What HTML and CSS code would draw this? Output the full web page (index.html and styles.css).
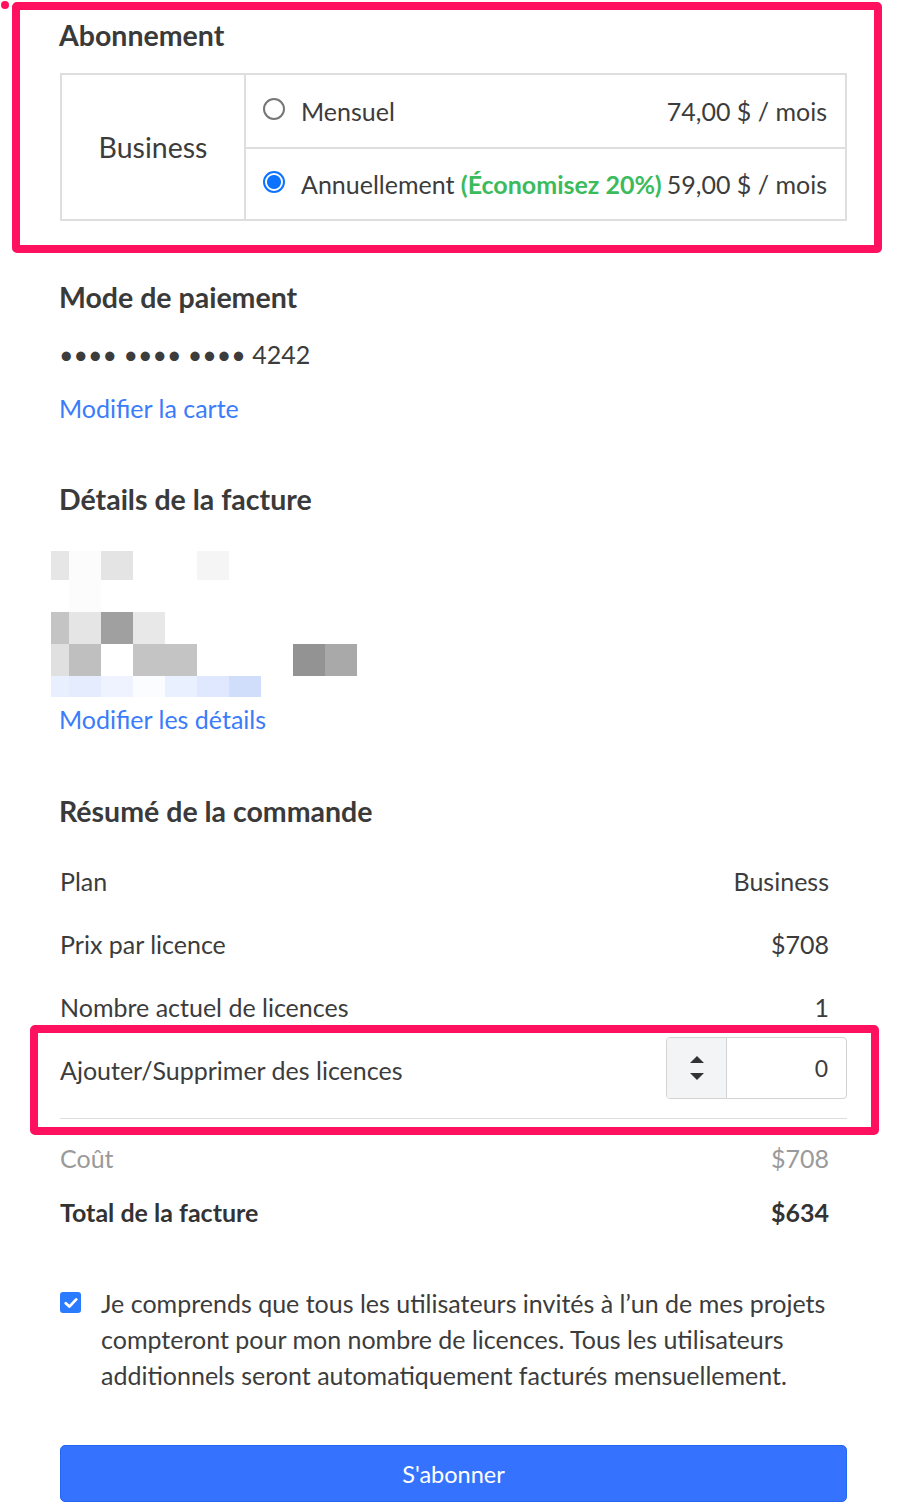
FILE: index.html
```html
<!DOCTYPE html>
<html lang="fr">
<head>
<meta charset="utf-8">
<title>Abonnement</title>
<link rel="stylesheet" href="styles.css">
</head>
<body>
<div class="page">
  <section class="section first">
    <h2 class="title">Abonnement</h2>
    <div class="plan-table">
      <div class="plan-name">Business</div>
      <div class="plan-options">
        <label class="option">
          <span class="radio"></span>
          <span class="opt-label">Mensuel</span>
          <span class="opt-price">74,00 $ / mois</span>
        </label>
        <label class="option">
          <span class="radio checked"></span>
          <span class="opt-label">Annuellement <b class="save">(Économisez 20%)</b></span>
          <span class="opt-price">59,00 $ / mois</span>
        </label>
      </div>
    </div>
  </section>

  <section class="section">
    <h2 class="title">Mode de paiement</h2>
    <p class="line card">•••• •••• •••• 4242</p>
    <a class="link" href="#">Modifier la carte</a>
  </section>

  <section class="section details">
    <h2 class="title">Détails de la facture</h2>
    <div class="blurred">
      <i class="c-e6"></i><i class="c-fd"></i><i class="c-e4"></i><i></i><i></i><i class="c-f5"></i><i></i><i></i><i></i><i></i>
      <i></i><i class="c-fd"></i><i></i><i></i><i></i><i></i><i></i><i></i><i></i><i></i>
      <i class="c-c4"></i><i class="c-e5"></i><i class="c-a0"></i><i class="c-e8"></i><i></i><i></i><i></i><i></i><i></i><i></i>
      <i class="c-e0"></i><i class="c-bf"></i><i></i><i class="c-c4"></i><i class="c-c4"></i><i></i><i></i><i></i><i class="c-93"></i><i class="c-a9"></i>
      <i class="b-1"></i><i class="b-2"></i><i class="b-3"></i><i class="b-4"></i><i class="b-5"></i><i class="b-6"></i><i class="b-7"></i><i></i><i></i><i></i>
    </div>
    <a class="link link-details" href="#">Modifier les détails</a>
  </section>

  <section class="section">
    <h2 class="title">Résumé de la commande</h2>
    <div class="summary">
      <div class="row"><span>Plan</span><span class="val">Business</span></div>
      <div class="row"><span>Prix par licence</span><span class="val">$708</span></div>
      <div class="row"><span>Nombre actuel de licences</span><span class="val">1</span></div>
      <div class="row row-input">
        <span>Ajouter/Supprimer des licences</span>
        <div class="stepper">
          <span class="spin">
            <svg width="16" height="28" viewBox="0 0 16 28"><path d="M8 2 L15 9 L1 9 Z" fill="#333"/><path d="M1 19 L15 19 L8 26 Z" fill="#333"/></svg>
          </span>
          <span class="num">0</span>
        </div>
      </div>
      <div class="row row-cost"><span>Coût</span><span class="val">$708</span></div>
      <div class="row row-total"><span>Total de la facture</span><span class="val">$634</span></div>
    </div>
  </section>

  <label class="agree">
    <span class="checkbox">
      <svg width="14" height="12" viewBox="0 0 14 12"><path d="M1.8 6.2 L5.4 9.6 L12.2 2.4" fill="none" stroke="#fff" stroke-width="2.8" stroke-linecap="round" stroke-linejoin="round"/></svg>
    </span>
    <span class="agree-text">Je comprends que tous les utilisateurs invités à l’un de mes projets compteront pour mon nombre de licences. Tous les utilisateurs additionnels seront automatiquement facturés mensuellement.</span>
  </label>

  <button class="subscribe" type="button">S'abonner</button>
</div>

<span class="mark-dot"></span>
<div class="mark mark-top"></div>
<div class="mark mark-licences"></div>
</body>
</html>
```

FILE: styles.css
```css
* { box-sizing: border-box; }

html, body {
  margin: 0;
  padding: 0;
  background: #fff;
}

body {
  font-family: "Lato", "Open Sans", "Liberation Sans", sans-serif;
  color: #3c3c3c;
  font-size: 25px;
  line-height: 32px;
  position: relative;
  width: 900px;
  min-height: 1506px;
}

.page {
  width: 900px;
  padding: 19px 53px 0 59px;
}

.section { margin-top: 60px; }
.section.first { margin-top: 0; }
.section.details { margin-top: 59px; }

.title {
  margin: 0;
  font-size: 28.5px;
  line-height: 32px;
  font-weight: 700;
  color: #3a3a3a;
}

/* Plan table */
.plan-table {
  margin-top: 22px;
  margin-left: 1px;
  display: grid;
  grid-template-columns: 184px 1fr;
  border: 2px solid #dedede;
}

.plan-name {
  display: flex;
  align-items: center;
  justify-content: center;
  border-right: 2px solid #dedede;
  font-size: 28.5px;
}

.plan-options { display: flex; flex-direction: column; }

.option {
  height: 72px;
  display: flex;
  align-items: center;
  padding: 0 18px 0 17px;
}
.option + .option { border-top: 2px solid #dedede; }

.radio {
  width: 22px;
  height: 22px;
  border-radius: 50%;
  border: 2px solid #767676;
  margin-right: 16px;
  flex: none;
  position: relative;
  top: -2px;
}
.radio.checked {
  border-color: #0b73ff;
  background: radial-gradient(circle, #0b73ff 0 6.5px, #fff 7.5px);
}

.opt-label { flex: 1; }
.save { color: #3bbb5c; font-weight: 700; }
.opt-price { text-align: right; }

/* Payment */
.line { margin: 0; }
.card { margin-top: 25px; }

.link {
  display: block;
  margin-top: 22px;
  color: #3a7cf9;
  text-decoration: none;
  width: max-content;
}

/* Blurred billing details */
.blurred {
  margin-top: 36px;
  margin-left: -8px;
  display: grid;
  grid-template-columns: 18px repeat(9, 32px);
  grid-template-rows: 29px 32px 32px 32px 21px;
}
.blurred i { display: block; }
.c-e6 { background: #e6e6e6; }
.c-fd { background: #fcfcfc; }
.c-e4 { background: #e4e4e4; }
.c-f5 { background: #f5f5f5; }
.c-c4 { background: #c4c4c4; }
.c-e5 { background: #e5e5e5; }
.c-a0 { background: #a0a0a0; }
.c-e8 { background: #e8e8e8; }
.c-e0 { background: #e0e0e0; }
.c-bf { background: #bfbfbf; }
.c-93 { background: #939393; }
.c-a9 { background: #a9a9a9; }
.b-1 { background: #e8f0ff; }
.b-2 { background: #e4ecfe; }
.b-3 { background: #eef3ff; }
.b-4 { background: #fafcff; }
.b-5 { background: #e9f0ff; }
.b-6 { background: #dfe8fe; }
.b-7 { background: #d0defc; }

.link-details { margin-top: 6px; }

/* Summary */
.summary { margin-top: 22px; margin-left: 1px; }

.row {
  display: flex;
  align-items: center;
  justify-content: space-between;
  height: 63px;
  padding-right: 18px;
}

.row-input {
  padding-right: 0;
  padding-top: 1px;
  height: 81px;
  align-items: flex-start;
  border-bottom: 1px solid #dedede;
}
.row-input > span { line-height: 62px; }

.stepper {
  display: flex;
  width: 181px;
  height: 62px;
  border: 1px solid #d3d3d3;
  border-radius: 4px;
  overflow: hidden;
  margin-top: -2px;
}
.spin {
  width: 60px;
  background: #f3f4f5;
  border-right: 1px solid #d3d3d3;
  display: flex;
  align-items: center;
  justify-content: center;
}
.num {
  flex: 1;
  text-align: right;
  padding-right: 18px;
  line-height: 60px;
  font-size: 23px;
}

.row-cost { color: #9a9a9a; height: 54px; margin-top: 12px; }
.row-total { font-weight: 700; height: 54px; color: #333; }

/* Agreement */
.agree {
  display: flex;
  align-items: flex-start;
  margin-top: 46px;
  margin-left: 1px;
  line-height: 36px;
}
.checkbox {
  flex: none;
  width: 21px;
  height: 21px;
  border-radius: 3px;
  background: #2a7bff;
  margin-top: 7px;
  margin-right: 20px;
  display: flex;
  align-items: center;
  justify-content: center;
}
.agree-text { color: #3c3c3c; }

/* Button */
.subscribe {
  display: block;
  width: 787px;
  height: 57px;
  margin-top: 52px;
  margin-left: 1px;
  border: 1px solid #2467f5;
  border-radius: 5px;
  background: #3573ff;
  color: #fff;
  font-family: "Lato", "Open Sans", "Liberation Sans", sans-serif;
  font-size: 23.5px;
}

/* Annotation overlays */
.mark {
  position: absolute;
  border: 8px solid #ff1160;
  border-radius: 5px;
  pointer-events: none;
}
.mark-top { left: 12px; top: 2px; width: 870px; height: 251px; }
.mark-licences { left: 30px; top: 1025px; width: 849px; height: 110px; }
.mark-dot {
  position: absolute;
  left: 1px;
  top: 1px;
  width: 8px;
  height: 8px;
  border-radius: 50%;
  background: #ff1160;
}
```
